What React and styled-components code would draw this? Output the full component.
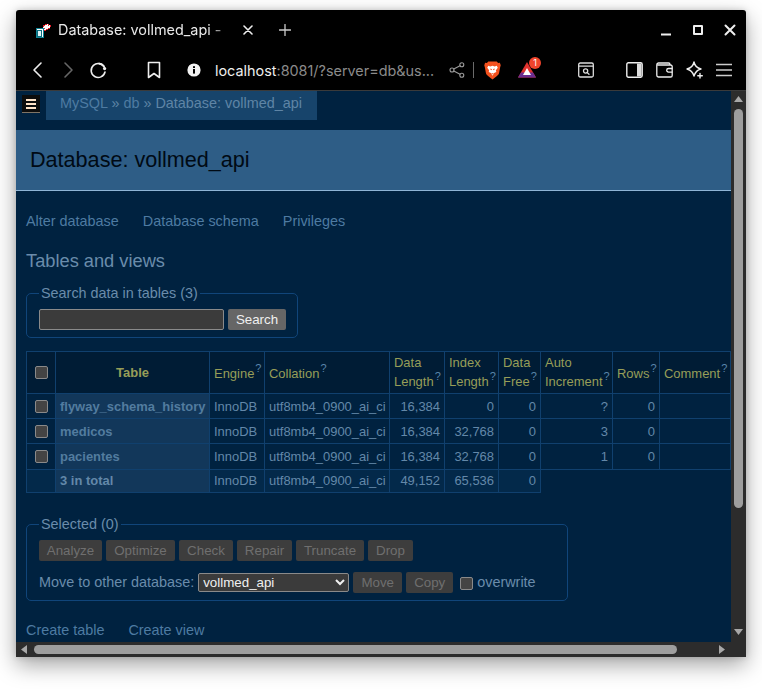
import React from "react";
import styled, { createGlobalStyle } from "styled-components";

const Global = createGlobalStyle`
  html, body { margin: 0; padding: 0; background: #fff; }
  #root { width: 762px; height: 689px; overflow: hidden; }
`;

const Windowed = styled.div`
  width: 730px; height: 647px; margin: 10px 16px 0;
  display: flex; flex-direction: column;
  background: #000; border-radius: 3px 3px 0 0; overflow: hidden;
  box-shadow: 0 8px 22px rgba(0,0,0,.36), 0 0 6px rgba(0,0,0,.16);
`;
const Shell = styled.div`padding: 0;`;

const TitleBar = styled.div`
  height: 40px; display: flex; align-items: center; flex: none;
  font-family: Inter, "Noto Sans", sans-serif; color: #e8e8e8;
`;
const Favicon = styled.span`margin-left: 19px; width: 16px; height: 17px; display: flex;`;
const TabTitle = styled.span`
  margin-left: 7px; width: 172px; font-size: 14.4px; white-space: nowrap; padding-bottom: 1px;
  -webkit-mask-image: linear-gradient(to right, #000 150px, rgba(0,0,0,.25) 172px);
  mask-image: linear-gradient(to right, #000 150px, rgba(0,0,0,.25) 172px);
`;
const TitleIcon = styled.span`
  display: flex; align-items: center; justify-content: center;
  width: ${p => p.$w}px; margin-left: ${p => p.$ml || 0}px;
`;
const WinControls = styled.div`margin-left: auto; display: flex; padding-right: 0;`;

const ToolBar = styled.div`
  height: 40px; flex: none; display: flex; align-items: center; padding-left: 7px;
  font-family: Inter, "Noto Sans", sans-serif; border-bottom: 1px solid #3a3a3a; box-sizing: content-box;
`;
const Slot = styled.span`
  display: flex; align-items: center; justify-content: center; position: relative;
  width: ${p => p.$w || 30}px; margin-left: ${p => p.$ml || 0}px; flex: none;
`;
const Address = styled.span`
  margin-left: 6px; width: 227px; font-size: 14.4px; color: #8b8b8b; white-space: nowrap; overflow: hidden;
`;
const Host = styled.span`color: #eee;`;
const Divider = styled.span`width: 1px; height: 16px; background: #6a6a6a; margin-left: 1px; flex: none;`;
const RightIcons = styled.div`margin-left: auto; display: flex; align-items: center; padding-right: 7px;`;
const Badge = styled.span`
  position: absolute; left: 14px; top: -5px; width: 12px; height: 12px; border-radius: 50%;
  background: #f0442c; color: #fff; font-size: 9px; line-height: 12px; text-align: center;
`;

const Viewport = styled.div`flex: 1; min-height: 0; display: flex;`;
const Page = styled.main`
  flex: 1; min-width: 0; background: #002240; overflow: hidden;
  font-family: "Liberation Sans", Arial, sans-serif; font-size: 14.4px; color: #6a8cab;
`;
const VScroll = styled.div`
  width: 15px; flex: none; background: #2c2c2c; display: flex; flex-direction: column; align-items: center;
  padding: 5px 0 7px; box-sizing: border-box;
`;
const ArrowSvg = styled.svg`display: block; flex: none;`;
const VThumb = styled.div`width: 9px; height: 399px; margin-top: 7px; border-radius: 5px; background: #9e9e9e;`;
const ArrowPush = styled.div`margin-top: auto;`;
const HScroll = styled.div`
  height: 15px; flex: none; background: #2c2c2c; display: flex; align-items: center; padding: 0 21px 0 5px;
`;
const HThumb = styled.div`width: 643px; height: 9px; margin-left: 7px; border-radius: 5px; background: #9e9e9e;`;
const HPush = styled.div`margin-left: auto;`;

const TopRow = styled.div`height: 39px; display: flex; align-items: flex-start;`;
const MenuButton = styled.div`
  width: 18px; height: 18px; margin: 4px 6px 0; box-sizing: border-box; background: #0d0d0d;
  border-bottom: 1px solid #7f7466; display: flex; flex-direction: column; justify-content: center;
  align-items: center; gap: 2px;
`;
const MenuLine = styled.span`width: 10px; height: 2px; background: #ffe3c8;`;
const Breadcrumb = styled.nav`
  height: 29px; padding: 4px 15px 0 14px; box-sizing: border-box; background: #17446b; color: #5f85a6; line-height: 17px;
`;
const Crumb = styled.a`color: #4e7ba2;`;

const Heading = styled.h2`
  margin: 0; height: 61px; box-sizing: border-box; padding-left: 14px; display: flex; align-items: center;
  background: #2e5d86; border-bottom: 1px solid #8fb5d6; color: #000a14; font-size: 21.6px; font-weight: 400;
`;
const Links = styled.div`
  display: flex; gap: ${p => p.$gap}px; margin: ${p => p.$m}; line-height: 17px;
`;
const Lnk = styled.a`color: #4e7ba2;`;
const SubHeading = styled.h3`
  margin: 20px 0 0 10px; font-size: 18.25px; line-height: 22px; font-weight: 400; color: #6a8cab;
`;
const Field = styled.fieldset`
  margin: ${p => p.$m}; width: ${p => p.$w}px; height: ${p => p.$h}px; box-sizing: border-box;
  border: 1px solid #10457a; border-radius: 5px; padding: 7px 11px 0 12px; min-width: 0;
`;
const Legend = styled.legend`padding: 0 2px; margin-left: 0; line-height: 17px; color: #6a8cab;`;
const FormRow = styled.div`display: flex; align-items: center; gap: 4px; margin-top: ${p => p.$mt || 0}px;`;
const TextInput = styled.input`
  width: 185px; height: 21px; flex: none; box-sizing: border-box; background: #3b3b3b; border: 1px solid #8a8a8a;
  border-radius: 2px; padding: 0; outline: none;
`;
const Btn = styled.button`
  height: 21px; flex: none; padding: 0; width: ${p => p.$w}px; border: 0; border-radius: 2px; box-sizing: border-box;
  font: 13.33px "Liberation Sans", Arial, sans-serif;
  background: ${p => p.$on ? "#666" : "#3d3d3d"}; color: ${p => p.$on ? "#f0f0f0" : "#6f6f6f"};
`;
const Label = styled.span`padding-bottom: 1px;`;
const Select = styled.select`
  width: 151px; height: 19px; box-sizing: border-box; margin-left: 0; color-scheme: dark;
  background: #3b3b3b; color: #f0f0f0; border: 1px solid #8a8a8a; border-radius: 2px;
  font: 13.33px "Liberation Sans", Arial, sans-serif; padding: 0;
`;
const Check = styled.input.attrs({ type: "checkbox" })`
  appearance: none; width: 13px; height: 13px; margin: ${p => p.$mt || 0}px 0 0; box-sizing: border-box; display: block;
  background: #444; border: 1px solid #8a8a8a; border-radius: 2px;
`;
const CheckLabel = styled.label`display: flex; align-items: center; gap: 4px; margin-left: 3px; color: #6a8cab;`;

const TablesGrid = styled.table`
  margin: 13px 0 0 10px; border-collapse: collapse; table-layout: fixed; width: 704px; font-size: 12.96px;
`;
const HeadCell = styled.th`
  height: 42px; padding: ${p => p.$two ? "0 4px 2px" : p.$bold ? "0 4px" : "2px 4px 0"}; box-sizing: border-box;
  border: 1px solid #10406e; background: #001c35;
  color: #979e58; font-weight: ${p => p.$bold ? 700 : 400}; text-align: ${p => p.$bold ? "center" : "left"};
  line-height: 19px; vertical-align: middle;
`;
const Sup = styled.sup`
  color: #5a85aa; font-size: 11px; line-height: 0; vertical-align: baseline; position: relative; top: -6px; margin-left: 1px;
`;
const Row = styled.tr`height: ${p => p.$h}px;`;
const Cell = styled.td`
  padding: 0 4px ${p => p.$total ? 2 : 0}px; box-sizing: border-box; border: 1px solid #10406e; white-space: nowrap;
  text-align: ${p => p.$num ? "right" : "left"}; color: #6388a9;
  background: ${p => p.$total ? "#03294a" : "#002240"};
`;
const NameCell = styled.th`
  padding: 0 4px ${p => p.$total ? 2 : 0}px; box-sizing: border-box; border: 1px solid #10406e; white-space: nowrap; text-align: left;
  background: #12375a; color: ${p => p.$total ? "#6388a9" : "#527c9f"}; font-weight: 700;
`;
const CheckCell = styled.td`
  padding: 0 0 0 8px; box-sizing: border-box; border: 1px solid #10406e; background: ${p => p.$total ? "#03294a" : "#002240"};
`;
const HeadCheck = styled(HeadCell)`padding: 0 0 0 8px;`;

const Ico = ({ children, w = 20, h = 20, vb, sw = 1.6, c = "#eee" }) => (
  <svg width={w} height={h} viewBox={vb || `0 0 ${w} ${h}`} fill="none" stroke={c} strokeWidth={sw} strokeLinecap="round" strokeLinejoin="round">{children}</svg>
);

const cols = [29, 154, 55, 125, 55, 54, 42, 72, 47, 71];
const rows = [
  ["flyway_schema_history", "16,384", "0", "0", "?", "0", 25],
  ["medicos", "16,384", "32,768", "0", "3", "0", 25],
  ["pacientes", "16,384", "32,768", "0", "1", "0", 26],
];
const Q = () => <Sup>?</Sup>;

export default function App() {
  return (
    <Shell>
      <Global />
      <Windowed>
        <TitleBar>
          <Favicon>
            <svg width="16" height="17" viewBox="0 0 16 17" shapeRendering="crispEdges">
              <path d="M8 3h2V2h3v1h2v3h-2v1h-2v1H9V6H8z" fill="#fff" stroke="#e2212b" strokeWidth="1" strokeDasharray="2 1" />
              <rect x="1" y="6.5" width="7" height="9" fill="#fff" stroke="#0f8294" />
              <rect x="2" y="8" width="5" height="6.5" fill="#0c6e80" />
              <rect x="3" y="9" width="3" height="5" fill="#dff3f6" />
            </svg>
          </Favicon>
          <TabTitle>Database: vollmed_api -</TabTitle>
          <TitleIcon $w={20} $ml={8}>
            <Ico w={10} h={10} sw={1.6} vb="0 0 10 10"><path d="M1 1l8 8M9 1l-8 8" /></Ico>
          </TitleIcon>
          <TitleIcon $w={14} $ml={20}>
            <Ico w={12} h={12} sw={1.3} c="#ccc" vb="0 0 12 12"><path d="M6 0.5v11M0.5 6h11" /></Ico>
          </TitleIcon>
          <WinControls>
            <TitleIcon $w={32}><Ico w={12} h={12} sw={1.8} vb="0 0 12 12"><path d="M1 10.5h10" strokeLinecap="butt" /></Ico></TitleIcon>
            <TitleIcon $w={32}><Ico w={12} h={12} sw={2} vb="0 0 12 12"><rect x="2" y="2" width="8" height="8" /></Ico></TitleIcon>
            <TitleIcon $w={32}><Ico w={12} h={12} sw={2} vb="0 0 12 12"><path d="M1.5 1.5l9 9M10.5 1.5l-9 9" /></Ico></TitleIcon>
          </WinControls>
        </TitleBar>
        <ToolBar>
          <Slot><Ico><path d="M13 3l-7 7 7 7" /></Ico></Slot>
          <Slot><Ico c="#666"><path d="M7 3l7 7-7 7" /></Ico></Slot>
          <Slot>
            <Ico><path d="M16.5 7.5A7 7 0 1 0 17 12" /><path d="M11 3.6a7 7 0 0 1 5 2.6" /><circle cx="16.6" cy="8.6" r="1.6" fill="#eee" stroke="none" /></Ico>
          </Slot>
          <Slot $ml={26}><Ico w={16} h={18} vb="0 0 16 18"><path d="M2.5 1.5h11v15L8 12.5l-5.5 4z" /></Ico></Slot>
          <Slot $ml={10}>
            <svg width="14" height="14" viewBox="0 0 14 14"><circle cx="7" cy="7" r="6.6" fill="#f2f2f2" /><rect x="6" y="6" width="2" height="4.6" fill="#000" /><rect x="6" y="3.2" width="2" height="1.8" fill="#000" /></svg>
          </Slot>
          <Address><Host>localhost</Host>:8081/?server=db&amp;us...</Address>
          <Slot $w={30} $ml={0}>
            <Ico w={16} h={16} sw={1.1} c="#999" vb="0 0 16 16"><circle cx="3" cy="8" r="2" /><circle cx="12.8" cy="2.8" r="2" /><circle cx="12.8" cy="13.2" r="2" /><path d="M4.8 7l6.2-3.3M4.8 9l6.2 3.3" /></Ico>
          </Slot>
          <Divider />
          <Slot $w={24} $ml={6}>
            <svg width="17" height="19" viewBox="0 0 16 18">
              <path d="M4 .5h8l1.3 1.5 1.7-.3.8 2.3-.6 2.2-1 5.4c-.3 1.2-1 1.8-2 2.5L8 17.5l-4.2-3.4c-1-.7-1.7-1.3-2-2.5l-1-5.4L.2 4l.8-2.3 1.7.3z" fill="#f3511e" />
              <path d="M4 4.5l2 .6 2-.7 2 .7 2-.6 1 2-1.8 2.2.4 1.7-2 1 -1.6 2.5-1.6-2.5-2-1 .4-1.7L3 6.5z" fill="#fff" />
              <path d="M6 7.5l1.3.8M10 7.5l-1.3.8M7 12h2" stroke="#f3511e" strokeWidth="1" />
            </svg>
          </Slot>
          <Slot $w={24} $ml={11}>
            <svg width="18" height="16" viewBox="0 0 18 16">
              <path d="M9 0l9 15.5H0z" fill="#e0322e" />
              <path d="M0 15.5l3-5h12l3 5z" fill="#6a2d90" />
              <path d="M9 6l4 7H5z" fill="#fff" />
            </svg>
            <Badge>1</Badge>
          </Slot>
          <RightIcons>
            <Slot>
              <Ico w={16} h={16} sw={1.3} c="#ddd" vb="0 0 16 16"><rect x=".7" y="1" width="14.6" height="14" rx="1.5" /><path d="M1 4.2h14" /><circle cx="7.6" cy="9" r="2.1" /><path d="M9.2 10.6l1.8 1.7" /></Ico>
            </Slot>
            <Slot $ml={18}>
              <svg width="17" height="16" viewBox="0 0 17 16"><rect x=".8" y=".8" width="15.4" height="14.4" rx="1.6" fill="none" stroke="#eee" strokeWidth="1.4" /><rect x="11" y="1.5" width="4.5" height="13" fill="#ddd" /></svg>
            </Slot>
            <Slot>
              <Ico w={17} h={16} sw={1.3} vb="0 0 17 16"><path d="M14 3V2.4A1.4 1.4 0 0 0 12.6 1H2.4A1.7 1.7 0 0 0 .8 2.7v10.6A1.7 1.7 0 0 0 2.4 15h12.2a1.6 1.6 0 0 0 1.6-1.6V4.6A1.6 1.6 0 0 0 14.6 3H2" /><path d="M16 6.5h-3.5a1.7 1.7 0 0 0 0 3.6H16" /></Ico>
            </Slot>
            <Slot $ml={1}>
              <Ico w={18} h={18} sw={1.4} vb="0 0 18 18"><path d="M8 1c.8 4 2.6 6 7 7-3.6.9-5.6 2.4-7 7-1.2-4.2-3.2-6-7-7 4-1 6.2-3 7-7z" /><path d="M14 12.5v4.5M11.8 14.8h4.5" /></Ico>
            </Slot>
            <Slot $ml={-1}>
              <Ico w={18} h={14} sw={1.6} c="#ccc" vb="0 0 18 14"><path d="M1 1.5h16M1 7h16M1 12.5h16" strokeLinecap="butt" /></Ico>
            </Slot>
          </RightIcons>
        </ToolBar>
        <Viewport>
          <Page>
            <TopRow>
              <MenuButton><MenuLine /><MenuLine /><MenuLine /></MenuButton>
              <Breadcrumb><Crumb>MySQL</Crumb> » <Crumb>db</Crumb> » Database: vollmed_api</Breadcrumb>
            </TopRow>
            <Heading>Database: vollmed_api</Heading>
            <Links $gap={24} $m="22px 0 0 10px">
              <Lnk>Alter database</Lnk><Lnk>Database schema</Lnk><Lnk>Privileges</Lnk>
            </Links>
            <SubHeading>Tables and views</SubHeading>
            <Field $m="13px 0 0 10px" $w={272} $h={53}>
              <Legend>Search data in tables (3)</Legend>
              <FormRow><TextInput /><Btn $on $w={58}>Search</Btn></FormRow>
            </Field>
            <TablesGrid>
              <colgroup>{cols.map((w, i) => <col key={i} width={w} />)}</colgroup>
              <thead>
                <tr>
                  <HeadCheck><Check /></HeadCheck>
                  <HeadCell $bold>Table</HeadCell>
                  <HeadCell>Engine<Q /></HeadCell>
                  <HeadCell>Collation<Q /></HeadCell>
                  <HeadCell $two>Data Length<Q /></HeadCell>
                  <HeadCell $two>Index Length<Q /></HeadCell>
                  <HeadCell $two>Data Free<Q /></HeadCell>
                  <HeadCell $two>Auto Increment<Q /></HeadCell>
                  <HeadCell>Rows<Q /></HeadCell>
                  <HeadCell>Comment<Q /></HeadCell>
                </tr>
              </thead>
              <tbody>
                {rows.map(r => (
                  <Row key={r[0]} $h={r[6]}>
                    <CheckCell><Check /></CheckCell>
                    <NameCell>{r[0]}</NameCell>
                    <Cell>InnoDB</Cell>
                    <Cell>utf8mb4_0900_ai_ci</Cell>
                    <Cell $num>{r[1]}</Cell>
                    <Cell $num>{r[2]}</Cell>
                    <Cell $num>{r[3]}</Cell>
                    <Cell $num>{r[4]}</Cell>
                    <Cell $num>{r[5]}</Cell>
                    <Cell />
                  </Row>
                ))}
                <Row $h={23}>
                  <CheckCell $total />
                  <NameCell $total>3 in total</NameCell>
                  <Cell $total>InnoDB</Cell>
                  <Cell $total>utf8mb4_0900_ai_ci</Cell>
                  <Cell $total $num>49,152</Cell>
                  <Cell $total $num>65,536</Cell>
                  <Cell $total $num>0</Cell>
                </Row>
              </tbody>
            </TablesGrid>
            <Field $m="23px 0 0 10px" $w={542} $h={85}>
              <Legend>Selected (0)</Legend>
              <FormRow>
                <Btn $w={63}>Analyze</Btn><Btn $w={69}>Optimize</Btn><Btn $w={54}>Check</Btn>
                <Btn $w={55}>Repair</Btn><Btn $w={68}>Truncate</Btn><Btn $w={45}>Drop</Btn>
              </FormRow>
              <FormRow $mt={11}>
                <Label>Move to other database:</Label>
                <Select defaultValue="vollmed_api"><option>vollmed_api</option></Select>
                <Btn $w={49}>Move</Btn><Btn $w={47}>Copy</Btn>
                <CheckLabel><Check $mt={2} /><Label>overwrite</Label></CheckLabel>
              </FormRow>
            </Field>
            <Links $gap={24} $m="21px 0 0 10px">
              <Lnk>Create table</Lnk><Lnk>Create view</Lnk>
            </Links>
          </Page>
          <VScroll>
            <ArrowSvg width="9" height="6" viewBox="0 0 9 6"><path d="M4.5 0L9 6H0z" fill="#a8a8a8" /></ArrowSvg>
            <VThumb />
            <ArrowPush><ArrowSvg width="9" height="6" viewBox="0 0 9 6"><path d="M4.5 6L9 0H0z" fill="#a8a8a8" /></ArrowSvg></ArrowPush>
          </VScroll>
        </Viewport>
        <HScroll>
          <ArrowSvg width="6" height="9" viewBox="0 0 6 9"><path d="M0 4.5L6 0v9z" fill="#a8a8a8" /></ArrowSvg>
          <HThumb />
          <HPush><ArrowSvg width="6" height="9" viewBox="0 0 6 9"><path d="M6 4.5L0 0v9z" fill="#a8a8a8" /></ArrowSvg></HPush>
        </HScroll>
      </Windowed>
    </Shell>
  );
}
